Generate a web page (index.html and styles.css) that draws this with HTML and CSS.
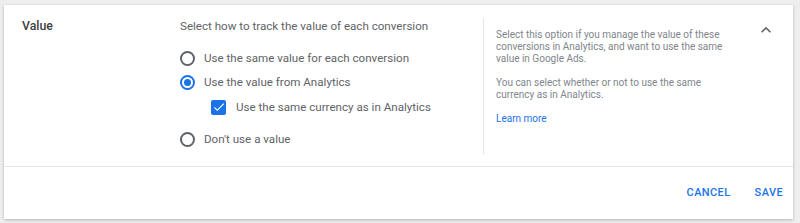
FILE: index.html
```html
<!DOCTYPE html>
<html lang="en">
<head>
    <meta charset="UTF-8">
    <meta name="viewport" content="width=device-width, initial-scale=1.0">
    <title>Conversion value</title>
    <link rel="stylesheet" href="styles.css">
</head>
<body>

    <div class="card">
        <div class="card-body">
            <div class="field-label">Value</div>

            <div class="options">
                <p class="options-title">Select how to track the value of each conversion</p>

                <label class="radio-row">
                    <span class="radio"></span>
                    Use the same value for each conversion
                </label>
                <label class="radio-row">
                    <span class="radio checked"></span>
                    Use the value from Analytics
                </label>
                <label class="check-row">
                    <span class="checkbox">
                        <svg viewBox="0 0 24 24" width="14" height="14">
                            <path d="M9 16.2L4.8 12l-1.4 1.4L9 19 21 7l-1.4-1.4L9 16.2z" fill="#fff"/>
                        </svg>
                    </span>
                    Use the same currency as in Analytics
                </label>
                <label class="radio-row last">
                    <span class="radio"></span>
                    Don't use a value
                </label>
            </div>

            <div class="help">
                <p>Select this option if you manage the value of these conversions in Analytics, and want to use the same value in Google Ads.</p>
                <p>You can select whether or not to use the same currency as in Analytics.</p>
                <a href="#" class="learn-more">Learn more</a>
            </div>

            <div class="collapse">
                <svg viewBox="0 0 24 24" width="20" height="20">
                    <path d="M12 8l-6 6 1.41 1.41L12 10.83l4.59 4.58L18 14z" fill="#5f6368"/>
                </svg>
            </div>
        </div>

        <div class="card-footer">
            <button class="text-btn">Cancel</button>
            <button class="text-btn">Save</button>
        </div>
    </div>

</body>
</html>
```

FILE: styles.css
```css
* {
    margin: 0;
    padding: 0;
    box-sizing: border-box;
}

body {
    font-family: Roboto, "Liberation Sans", sans-serif;
    background-color: #eeeeee;
    padding: 5px 7px 4px 4px;
}

.card {
    background: white;
    box-shadow: 0 1px 3px rgba(0,0,0,0.25);
    height: 214px;
}

.card-body {
    display: flex;
    height: 162px;
    padding: 13px 0 12px;
    border-bottom: 1px solid #e6e6e6;
}

.field-label {
    width: 176px;
    padding-left: 18px;
    font-size: 12.3px;
    font-weight: 500;
    line-height: 16px;
    color: #3c4043;
}

.options {
    width: 303px;
    font-size: 11.6px;
    color: #5f6368;
}

.options-title {
    line-height: 16px;
    margin-bottom: 12px;
}

.radio-row,
.check-row {
    display: flex;
    align-items: center;
    height: 24px;
    gap: 9px;
}

.radio-row.last {
    margin-top: 8px;
}

.check-row {
    padding-left: 31px;
    gap: 10px;
    margin-top: 1px;
}

.radio {
    width: 15px;
    height: 15px;
    border: 2px solid #5f6368;
    border-radius: 50%;
    display: flex;
    align-items: center;
    justify-content: center;
}

.radio.checked {
    border-color: #1a73e8;
}

.radio.checked::after {
    content: "";
    width: 7px;
    height: 7px;
    border-radius: 50%;
    background: #1a73e8;
}

.checkbox {
    width: 15px;
    height: 15px;
    border-radius: 2px;
    background: #1a73e8;
    display: flex;
    align-items: center;
    justify-content: center;
}

.help {
    width: 268px;
    border-left: 1px solid #e6e6e6;
    padding: 11px 21px 0 12px;
    font-size: 10px;
    line-height: 12px;
    color: #80868b;
}

.help p {
    margin-bottom: 12px;
}

.learn-more {
    color: #1a73e8;
    text-decoration: none;
}

.collapse {
    padding: 2px 0 0 5px;
}

.card-footer {
    height: 51px;
    display: flex;
    justify-content: flex-end;
    align-items: center;
    gap: 8px;
    padding-right: 2px;
}

.text-btn {
    background: none;
    border: none;
    font-family: inherit;
    font-size: 11px;
    font-weight: 500;
    letter-spacing: 0.4px;
    text-transform: uppercase;
    color: #1a73e8;
    padding: 8px;
    cursor: pointer;
}
```
